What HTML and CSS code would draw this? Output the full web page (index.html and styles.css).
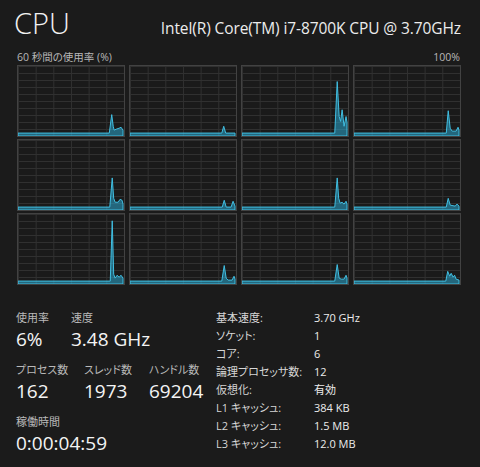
FILE: index.html
```html
<!DOCTYPE html>
<html lang="ja">
<head>
<meta charset="utf-8">
<title>CPU</title>
<link rel="stylesheet" href="styles.css">
</head>
<body>
<div class="page">
  <header class="header">
    <h1 class="title">CPU</h1>
    <div class="model">Intel(R) Core(TM) i7-8700K CPU @ 3.70GHz</div>
  </header>
  <div class="caption">
    <span>60 秒間の使用率 (%)</span>
    <span>100%</span>
  </div>
  <div class="cells">
    <div class="cell"><svg viewBox="0 0 108 72" preserveAspectRatio="none"><polygon class="g" points="0,72 0,69 93,69 95.5,50 97,62 98,66 100,65 103,64 105,63 107,66 107,72"/></svg></div>
    <div class="cell"><svg viewBox="0 0 108 72" preserveAspectRatio="none"><polygon class="g" points="0,72 0,69 93.5,69 95.5,62 97.5,69 107,69 107,72"/></svg></div>
    <div class="cell"><svg viewBox="0 0 108 72" preserveAspectRatio="none"><polygon class="g" points="0,72 0,69 94.5,69 97,16 99,52 100.5,57 102,45 104,62 106,52 107,58 107,72"/></svg></div>
    <div class="cell"><svg viewBox="0 0 108 72" preserveAspectRatio="none"><polygon class="g" points="0,72 0,69 94,69 96,46 98,64 100,67 104,67 106,63 107,66 107,72"/></svg></div>

    <div class="cell"><svg viewBox="0 0 108 72" preserveAspectRatio="none"><polygon class="g" points="0,72 0,69 93.5,69 96,39 97.5,60 99,64 102,64 104,61 106,62 107,66 107,72"/></svg></div>
    <div class="cell"><svg viewBox="0 0 108 72" preserveAspectRatio="none"><polygon class="g" points="0,72 0,69 94,69 96,62 98,69 103,69 105,63 107,68 107,72"/></svg></div>
    <div class="cell"><svg viewBox="0 0 108 72" preserveAspectRatio="none"><polygon class="g" points="0,72 0,69 94.5,69 97,39 98.5,60 100,65 102,64 104,66 106,63 107,66 107,72"/></svg></div>
    <div class="cell"><svg viewBox="0 0 108 72" preserveAspectRatio="none"><polygon class="g" points="0,72 0,69 94,69 96,60 98,67 103,68 105,66 107,68 107,72"/></svg></div>

    <div class="cell"><svg viewBox="0 0 108 72" preserveAspectRatio="none"><polygon class="g" points="0,72 0,69 94,69 96,7 97.5,62 99,66 101,63 103,65 105,63 107,66 107,72"/></svg></div>
    <div class="cell"><svg viewBox="0 0 108 72" preserveAspectRatio="none"><polygon class="g" points="0,72 0,69 93.5,69 96,53 98,66 100,68 104,68 106,64 107,67 107,72"/></svg></div>
    <div class="cell"><svg viewBox="0 0 108 72" preserveAspectRatio="none"><polygon class="g" points="0,72 0,69 94.5,69 97,52 99,66 101,67 104,67 106,63 107,66 107,72"/></svg></div>
    <div class="cell"><svg viewBox="0 0 108 72" preserveAspectRatio="none"><polygon class="g" points="0,72 0,69 93.5,69 95.5,59 97.5,64 99,61 101,65 102.5,63 104,67 107,68 107,72"/></svg></div>
  </div>

  <section class="stats">
    <div class="dyn">
      <div class="row">
        <div class="stat w55"><div class="lbl">使用率</div><div class="val">6%</div></div>
        <div class="stat"><div class="lbl">速度</div><div class="val">3.48 GHz</div></div>
      </div>
      <div class="row">
        <div class="stat w68"><div class="lbl">プロセス数</div><div class="val">162</div></div>
        <div class="stat w64"><div class="lbl">スレッド数</div><div class="val">1973</div></div>
        <div class="stat"><div class="lbl">ハンドル数</div><div class="val">69204</div></div>
      </div>
      <div class="row">
        <div class="stat"><div class="lbl">稼働時間</div><div class="val">0:00:04:59</div></div>
      </div>
    </div>
    <dl class="spec">
      <dt>基本速度:</dt><dd>3.70 GHz</dd>
      <dt>ソケット:</dt><dd>1</dd>
      <dt>コア:</dt><dd>6</dd>
      <dt>論理プロセッサ数:</dt><dd>12</dd>
      <dt>仮想化:</dt><dd>有効</dd>
      <dt>L1 キャッシュ:</dt><dd>384 KB</dd>
      <dt>L2 キャッシュ:</dt><dd>1.5 MB</dd>
      <dt>L3 キャッシュ:</dt><dd>12.0 MB</dd>
    </dl>
  </section>
</div>
</body>
</html>
```

FILE: styles.css
```css
html, body {
  margin: 0;
  padding: 0;
  background: #1b1b1b;
}
body {
  width: 480px;
  height: 467px;
  overflow: hidden;
  font-family: "Open Sans", "Noto Sans CJK JP", sans-serif;
  font-feature-settings: "palt";
  color: #ececec;
}
.page {
  padding: 0 19px 0 17px;
}
.header {
  display: flex;
  justify-content: space-between;
  align-items: baseline;
  height: 46px;
}
.title {
  margin: 0 0 0 -3px;
  font-size: 29px;
  font-weight: 300;
  line-height: 46px;
  color: #f2f2f2;
}
.model {
  font-size: 15.5px;
  color: #ececec;
  letter-spacing: -0.1px;
}
.caption {
  display: flex;
  justify-content: space-between;
  font-size: 10.5px;
  line-height: 14px;
  color: #b8b8b8;
  margin-top: 4px;
  margin-right: 1px;
}
.cells {
  margin-top: 1px;
  display: grid;
  grid-template-columns: repeat(4, 108px);
  grid-auto-rows: 72px;
  column-gap: 4px;
  row-gap: 2px;
}
.cell {
  box-sizing: border-box;
  border: 1px solid #424242;
  background-color: #1a1a1a;
  background-image:
    linear-gradient(to right, #303030 1px, transparent 1px),
    linear-gradient(to bottom, #303030 1px, transparent 1px);
  background-size: calc(100% / 6) 100%, 100% 10%;
}
.cell svg {
  display: block;
  width: 100%;
  height: 100%;
}
.g {
  fill: rgba(44, 168, 208, 0.55);
  stroke: #40bfe2;
  stroke-width: 1;
  vector-effect: non-scaling-stroke;
}
.stats {
  display: flex;
  margin-top: 25px;
}
.dyn {
  width: 200px;
  margin-left: -1px;
}
.row {
  display: flex;
  margin-bottom: 9px;
}
.stat.w55 { width: 55px; }
.stat.w68 { width: 68px; }
.stat.w64 { width: 65px; }
.lbl {
  font-size: 11px;
  line-height: 16px;
  color: #b9b9b9;
}
.val {
  font-size: 19px;
  line-height: 27px;
  color: #f4f4f4;
}
.spec {
  margin: 0;
  display: grid;
  grid-template-columns: 98px auto;
  grid-auto-rows: 18px;
  font-size: 11px;
  line-height: 18px;
  color: #d6d6d6;
  margin-top: -1px;
}
.spec dt, .spec dd {
  margin: 0;
}
.spec dd {
  color: #ececec;
}
```
